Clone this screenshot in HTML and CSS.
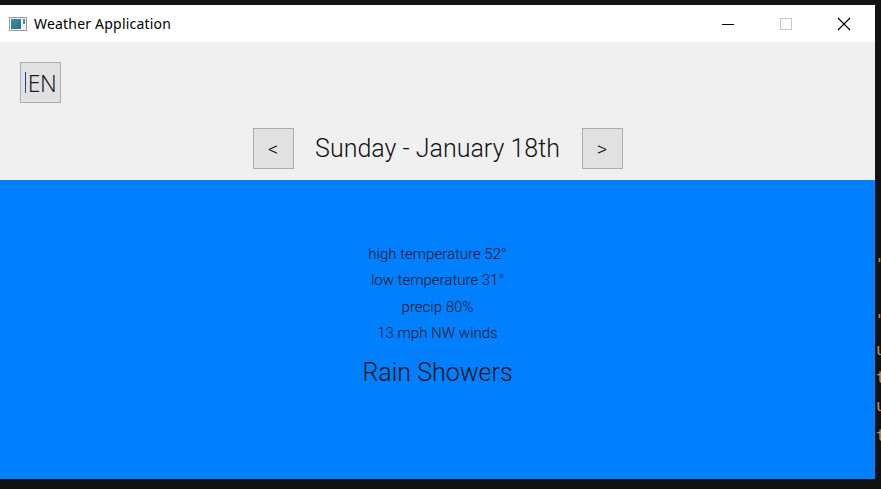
FILE: index.html
```html
<!DOCTYPE html>
<html>
<head>
<meta charset="utf-8">
<link rel="stylesheet" href="styles.css">
</head>
<body>
<div class="desktop">
  <div class="window">
    <div class="titlebar">
      <svg class="app-icon" width="18" height="14" viewBox="0 0 18 14">
        <rect x="0.5" y="0.5" width="17" height="13" fill="#f4f4f4" stroke="#9a9a9a"/>
        <defs><linearGradient id="g" x1="0" y1="0" x2="1" y2="1"><stop offset="0" stop-color="#3a9a8a"/><stop offset="1" stop-color="#2a6a9a"/></linearGradient></defs>
        <rect x="2" y="2" width="10" height="10" fill="url(#g)"/>
        <rect x="14" y="2" width="2" height="5" fill="#4a8ab0"/>
      </svg>
      <span class="title">Weather Application</span>
      <div class="controls">
        <svg class="ctl" width="46" height="30" viewBox="0 0 46 30"><line x1="17" y1="15.5" x2="29" y2="15.5" stroke="#000" stroke-width="1"/></svg>
        <svg class="ctl" width="46" height="30" viewBox="0 0 46 30"><rect x="17.5" y="9.5" width="11" height="11" fill="none" stroke="#c6c6c6" stroke-width="1"/></svg>
        <svg class="ctl" width="46" height="30" viewBox="0 0 46 30"><path d="M17 9 L29 21 M29 9 L17 21" stroke="#000" stroke-width="1.1"/></svg>
      </div>
    </div>
    <div class="header">
      <div class="lang-row">
        <div class="btn lang"><span class="caret"></span>EN</div>
      </div>
      <div class="nav-row">
        <div class="btn nav">&lt;</div>
        <div class="date">Sunday - January 18th</div>
        <div class="btn nav">&gt;</div>
      </div>
    </div>
    <div class="forecast">
      <div class="line">high temperature 52°</div>
      <div class="line">low temperature 31°</div>
      <div class="line">precip 80%</div>
      <div class="line">13 mph NW winds</div>
      <div class="summary">Rain Showers</div>
    </div>
  </div>
  <div class="code-peek">
    <span style="top:255px">"</span>
    <span style="top:311px">"</span>
    <span style="top:340px">u</span>
    <span style="top:368px">t</span>
    <span style="top:396px">u</span>
    <span style="top:426px">t</span>
  </div>
</div>
</body>
</html>
```

FILE: styles.css
```css
* { box-sizing: border-box; }
html, body { margin: 0; padding: 0; }
body {
  width: 881px;
  height: 489px;
  background: #131313;
  overflow: hidden;
  font-family: Roboto, "Noto Sans", sans-serif;
}
.desktop {
  position: relative;
  width: 881px;
  height: 489px;
  padding-top: 5px;
}
.window {
  width: 875px;
  height: 474px;
  display: flex;
  flex-direction: column;
  background: #f0f0f0;
}
.titlebar {
  height: 37px;
  background: #ffffff;
  display: flex;
  align-items: center;
  padding-left: 9px;
}
.app-icon { margin-right: 7px; }
.title {
  font-family: "Noto Sans", "Open Sans", sans-serif;
  font-size: 14px;
  color: #000;
  letter-spacing: 0.2px;
}
.controls {
  margin-left: auto;
  display: flex;
  gap: 12px;
  margin-right: 8px;
}
.ctl { display: block; }
.header {
  height: 138px;
  display: flex;
  flex-direction: column;
}
.lang-row {
  padding: 20px 0 0 20px;
  height: 86px;
}
.btn {
  width: 41px;
  height: 41px;
  background: #e1e1e1;
  border: 1px solid #adadad;
  display: flex;
  align-items: center;
  justify-content: center;
  color: #111;
}
.lang {
  font-family: "Noto Sans", "Open Sans", sans-serif;
  font-size: 23px;
  font-weight: 300;
  letter-spacing: -0.5px;
  color: #1a1a2a;
}
.caret {
  display: inline-block;
  width: 1px;
  height: 21px;
  background: #0a4ba8;
  margin-right: 2px;
}
.nav-row {
  display: flex;
  justify-content: center;
  align-items: center;
  gap: 21px;
}
.nav {
  font-family: Roboto, sans-serif;
  font-weight: 300;
  font-size: 20px;
}
.date {
  font-weight: 300;
  font-size: 25px;
  color: #111;
  width: 246px;
  text-align: center;
  white-space: nowrap;
}
.forecast {
  flex: 1;
  background: #0080ff;
  display: flex;
  flex-direction: column;
  align-items: center;
  padding-top: 61px;
  color: #111;
}
.line {
  font-weight: 300;
  font-size: 15px;
  line-height: 26.3px;
}
.summary {
  font-weight: 300;
  font-size: 25px;
  line-height: 30px;
  margin-top: 12px;
}
.code-peek {
  position: absolute;
  left: 875px;
  top: 0;
  width: 6px;
  height: 489px;
  overflow: hidden;
}
.code-peek span {
  position: absolute;
  left: 1px;
  font-family: "DejaVu Sans Mono", monospace;
  font-size: 16px;
  color: #c8915e;
}
```
